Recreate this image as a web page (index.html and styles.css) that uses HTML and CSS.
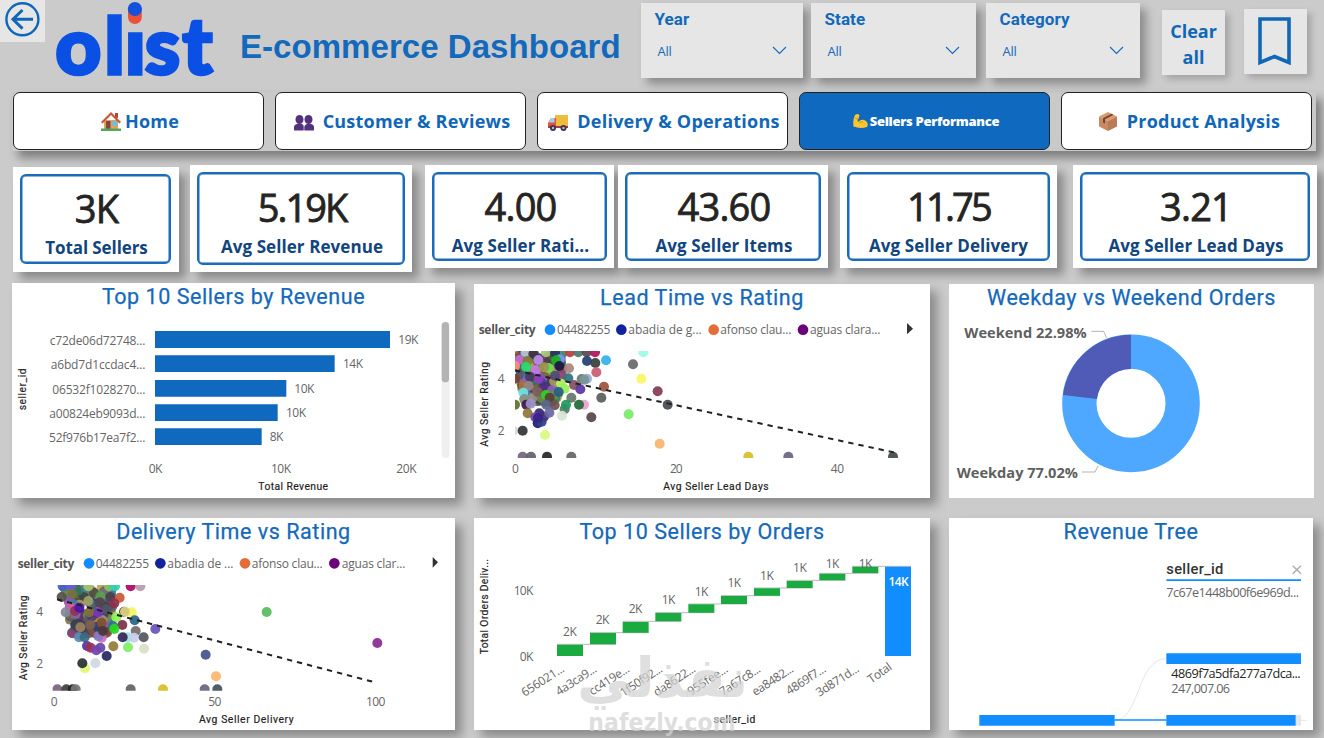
FILE: index.html
```html
<!DOCTYPE html>
<html lang="en">
<head>
<meta charset="utf-8">
<title>E-commerce Dashboard</title>
<link rel="stylesheet" href="styles.css">
</head>
<body>
<header class="header">
  <button class="back" aria-label="Back">
    <svg width="45" height="42" viewBox="0 0 45 42" fill="none" stroke="#1067b8" stroke-width="2.4"><circle cx="22.4" cy="19.3" r="16"/><path d="M33 19.3H13M22.5 10L13 19.3l9.500 9.300" stroke-width="3"/></svg>
  </button>
  <svg class="logo" width="160" height="80" viewBox="55 0 160 80">
    <defs><clipPath id="lg"><path d="M50 0H124V31H145V0H220V80H50z"/></clipPath></defs>
    <text class="logo-text" clip-path="url(#lg)" y="73.500" x="55.500 104.500 125 145 182.500">olist</text>
    <rect x="128" y="6" width="13.800" height="18" rx="6.900" fill="#eb5137"/>
    <circle cx="134.900" cy="9" r="7.100" fill="#1350db"/>
  </svg>
  <h1 class="brand">E-commerce Dashboard</h1>
  <div class="slicers">
    <div class="slicer year"><b>Year</b><span>All</span><svg class="chev" width="15" height="9"><path d="M1 1l6.500 6.500L14 1"/></svg></div>
    <div class="slicer state"><b>State</b><span>All</span><svg class="chev" width="15" height="9"><path d="M1 1l6.500 6.500L14 1"/></svg></div>
    <div class="slicer category"><b>Category</b><span>All</span><svg class="chev" width="15" height="9"><path d="M1 1l6.500 6.500L14 1"/></svg></div>
  </div>
  <button class="tool clear">Clear<br>all</button>
  <button class="tool mark" aria-label="Bookmarks"><svg width="34" height="50" viewBox="0 0 34 50"><path d="M2 2H31V45.500L16.500 39.500L2 45.500z" fill="none" stroke="#1067b8" stroke-width="3.600"/></svg></button>
</header>

<nav class="tabs">
  <a class="tab home"><svg class="ico" width="20" height="20" viewBox="0 0 20 20"><path d="M3 9h14v9H3z" fill="#e6a05e"/><path d="M14 2h3v5h-3z" fill="#b5492f"/><path d="M10 1L0 11l1.500 1.500L10 4l8.500 8.500L20 11z" fill="#c9553a"/><path d="M5 10h4.500v8H5z" fill="#7b4a3f"/><path d="M11.500 10h4.500v5h-4.500z" fill="#62c3e4"/><path d="M0 17.500h20V20H0z" fill="#57a45f"/></svg><span>Home</span></a>
  <a class="tab customer"><svg class="ico" width="20" height="16" viewBox="0 0 20 16" fill="#54317f"><ellipse cx="5.500" cy="4.500" rx="4" ry="4.500"/><ellipse cx="14.500" cy="4.500" rx="4" ry="4.500"/><path d="M0 15.500V12q0-3 5-3.500q4.500 0 4.700 3v4zM10.300 15.500V12q.2-3 4.700-3.500q5 .5 5 3.500v3.500z"/></svg><span>Customer &amp; Reviews</span></a>
  <a class="tab delivery"><svg class="ico" width="20" height="17" viewBox="0 0 20 17"><path d="M7 1h13v12H7z" fill="#efbd3d"/><path d="M3 4h5v10H0V9z" fill="#e8503c"/><path d="M3 4h3.500v4.500H.8z" fill="#9bd3ee"/><path d="M0 12h20v2H0z" fill="#a33b54"/><g fill="#3c3450"><circle cx="5" cy="14" r="3"/><circle cx="15.500" cy="14" r="3"/></g><circle cx="5" cy="14" r="1.200" fill="#bbb"/><circle cx="15.500" cy="14" r="1.200" fill="#bbb"/></svg><span>Delivery &amp; Operations</span></a>
  <a class="tab sellers active"><svg class="ico" width="15" height="14" viewBox="0 0 15 14"><path d="M2 1q3-2 4.500.5L5.500 5l-1 .5L5 8q4-4 8-1q3 3 1 6Q7 15 .5 12.500Q-.5 6 2 1z" fill="#fbc531"/><path d="M2 4l3 1M6 9q2-2 4-1" stroke="#e08f1f" fill="none"/></svg><span>Sellers Performance</span></a>
  <a class="tab product"><svg class="ico" width="18" height="19" viewBox="0 0 18 19"><path d="M9 0l9 4.500L9 9 0 4.500z" fill="#d99a6c"/><path d="M0 4.500L9 9v10l-9-4.500z" fill="#c98a62"/><path d="M18 4.500L9 9v10l9-4.500z" fill="#b87a57"/><path d="M12.500 1.800L4 6.200v4.300l2 1V7.200l8.500-4.400z" fill="#704337"/></svg><span>Product Analysis</span></a>
</nav>

<section class="kpis">
  <div class="kpi k1"><div class="box"><strong>3K</strong><span>Total Sellers</span></div></div>
  <div class="kpi k2"><div class="box"><strong>5.19K</strong><span>Avg Seller Revenue</span></div></div>
  <div class="kpi k3"><div class="box"><strong>4.00</strong><span>Avg Seller Rati...</span></div></div>
  <div class="kpi k4"><div class="box"><strong>43.60</strong><span>Avg Seller Items</span></div></div>
  <div class="kpi k5"><div class="box"><strong>11.75</strong><span>Avg Seller Delivery</span></div></div>
  <div class="kpi k6"><div class="box"><strong>3.21</strong><span>Avg Seller Lead Days</span></div></div>
</section>

<main class="panels">
  <section class="panel p1">
    <h2>Top 10 Sellers by Revenue</h2>
    <svg width="443" height="185" viewBox="36 99 1329 555">
      <text class="din" transform="translate(79 391) rotate(-90)" textLength="126">seller_id</text>
      <g class="lab">
        <text x="149" y="195" textLength="287">c72de06d72748...</text>
        <text x="152" y="268" textLength="284">a6bd7d1ccdac4...</text>
        <text x="157" y="341" textLength="279">06532f1028270...</text>
        <text x="148" y="414" textLength="288">a00824eb9093d...</text>
        <text x="147" y="486" textLength="289">52f976b17ea7f2...</text>
        <text x="1195" y="192" textLength="60">19K</text>
        <text x="1029" y="264" textLength="60">14K</text>
        <text x="883" y="339" textLength="60">10K</text>
        <text x="858" y="411" textLength="60">10K</text>
        <text x="809" y="483" textLength="41">8K</text>
        <text x="446" y="579" textLength="41">0K</text>
        <text x="813" y="579" textLength="60">10K</text>
        <text x="1189" y="579" textLength="61">20K</text>
      </g>
      <g fill="#0f69be"><path d="M465 153h705v51H465zM465 226h539v50H465zM465 300h394v50H465zM465 373h368v50H465zM465 445h320v50H465z"/></g>
      <text class="din" x="775" y="630" textLength="209">Total Revenue</text>
      <rect x="1325" y="126" width="24" height="408" rx="11" fill="#efefef"/>
      <rect x="1325" y="126" width="22" height="181" rx="11" fill="#b3b3b3"/>
    </svg>
  </section>

  <section class="panel p2">
    <h2>Lead Time vs Rating</h2>
    <svg width="456" height="184" viewBox="12 102 1368 552">
      <defs><clipPath id="c1"><path d="M135 213H1330V534H135z"/></clipPath></defs>
      <g class="leg">
        <text class="b" x="26" y="161" textLength="171">seller_city</text>
        <text x="261" y="161" textLength="160">04482255</text>
        <text x="475" y="161" textLength="220">abadia de g...</text>
        <text x="751" y="161" textLength="213">afonso clau...</text>
        <text x="1020" y="161" textLength="211">aguas clara...</text>
      </g>
      <circle cx="240" cy="149" r="16" fill="#118dff"/><circle cx="454" cy="149" r="16" fill="#12239e"/><circle cx="731" cy="149" r="16" fill="#e66c37"/><circle cx="999" cy="149" r="16" fill="#6b007b"/>
      <path d="M1311 129L1329 146L1311 163z" fill="#333"/>
      <g clip-path="url(#c1)" id="lead"></g>
      <path d="M135 271L1280 519" class="trend"/>
      <text class="din" transform="translate(53 500) rotate(-90)" textLength="254">Avg Seller Rating</text>
      <g class="lab">
        <text x="83" y="309">4</text><text x="83" y="465">2</text>
        <text x="126" y="579">0</text><text x="600" y="579" textLength="38">20</text><text x="1082" y="579" textLength="40">40</text>
      </g>
      <text class="din" x="580" y="630" textLength="316">Avg Seller Lead Days</text>
    </svg>
  </section>

  <section class="panel p3">
    <h2>Weekday vs Weekend Orders</h2>
    <svg width="365" height="184" viewBox="27 102 1095 552">
      <circle cx="573" cy="370" r="155" fill="none" stroke="#4fa8ff" stroke-width="103"/>
      <path d="M573 164A206 206 0 0 0 369 345L471 357A103 103 0 0 1 573 267z" fill="#4f5bb6"/>
      <path d="M454 154H491L500 174M426 576H465L474 558" fill="none" stroke="#b3b3b3" stroke-width="3"/>
      <text class="donut" x="73" y="174" textLength="367" lengthAdjust="spacingAndGlyphs">Weekend 22.98%</text>
      <text class="donut" x="50" y="594" textLength="364" lengthAdjust="spacingAndGlyphs">Weekday 77.02%</text>
    </svg>
  </section>

  <section class="panel p4">
    <h2>Delivery Time vs Rating</h2>
    <svg width="443" height="182" viewBox="36 114 1329 546">
      <defs><clipPath id="c2"><path d="M157 225H1330V542H157z"/></clipPath></defs>
      <g class="leg">
        <text class="b" x="53" y="173" textLength="170">seller_city</text>
        <text x="287" y="173" textLength="160">04482255</text>
        <text x="502" y="173" textLength="198">abadia de ...</text>
        <text x="755" y="173" textLength="213">afonso clau...</text>
        <text x="1025" y="173" textLength="191">aguas clar...</text>
      </g>
      <circle cx="267" cy="160" r="16" fill="#118dff"/><circle cx="481" cy="160" r="16" fill="#12239e"/><circle cx="735" cy="160" r="16" fill="#e66c37"/><circle cx="1003" cy="160" r="16" fill="#6b007b"/>
      <path d="M1298 141L1314 157L1298 173z" fill="#333"/>
      <g clip-path="url(#c2)" id="deliv"></g>
      <path d="M171 268L1125 517" class="trend"/>
      <text class="din" transform="translate(80 511) rotate(-90)" textLength="255">Avg Seller Rating</text>
      <g class="lab">
        <text x="109" y="319">4</text><text x="109" y="474">2</text>
        <text x="152" y="588">0</text><text x="625" y="588" textLength="39">50</text><text x="1098" y="588" textLength="58">100</text>
      </g>
      <text class="din" x="597" y="639" textLength="284">Avg Seller Delivery</text>
    </svg>
  </section>

  <section class="panel p5">
    <h2>Top 10 Sellers by Orders</h2>
    <svg width="456" height="182" viewBox="12 114 1368 546">
      <text class="din" transform="translate(53 433) rotate(-90)" textLength="286">Total Orders Deliv...</text>
      <g class="lab"><text x="131" y="255" textLength="59">10K</text><text x="149" y="453" textLength="41">0K</text></g>
      <path d="M261 403H437M360 368H536M458 334H634M556 308H732M655 282H831M753 257H929M852 234H1028M950 211H1127M1048 190H1225M1147 169H1323" stroke="#aaa" stroke-width="2.500"/>
      <g fill="#1aab40"><path d="M261 404h78v34h-78zM360 369h78v34h-78zM458 336h78v32h-78zM556 309h78v25h-78zM655 283h78v25h-78zM753 258h78v24h-78zM852 235h78v22h-78zM950 213h78v21h-78zM1048 191h78v20h-78zM1147 170h78v19h-78z"/></g>
      <path d="M1245 170h78v268h-78z" fill="#118dff"/>
      <g class="lab mid">
        <text x="299" y="379">2K</text><text x="397" y="343">2K</text><text x="496" y="309">2K</text><text x="595" y="282">1K</text><text x="694" y="258">1K</text><text x="792" y="231">1K</text><text x="890" y="210">1K</text><text x="989" y="186">1K</text><text x="1087" y="174">1K</text><text x="1186" y="173">1K</text>
        <text x="1285" y="228" class="tot">14K</text>
      </g>
      <g class="lab">
        <text transform="translate(164 561) rotate(-33)" textLength="145">656021...</text>
        <text transform="translate(267 558) rotate(-33)" textLength="138">4a3ca9...</text>
        <text transform="translate(367 557) rotate(-33)" textLength="136">cc419e...</text>
        <text transform="translate(460 561) rotate(-33)" textLength="143">1f50f92...</text>
        <text transform="translate(560 560) rotate(-33)" textLength="142">da8622...</text>
        <text transform="translate(662 558) rotate(-33)" textLength="137">955fee...</text>
        <text transform="translate(758 559) rotate(-33)" textLength="139">7a67c8...</text>
        <text transform="translate(856 559) rotate(-33)" textLength="140">ea8482...</text>
        <text transform="translate(958 556) rotate(-33)" textLength="134">4869f7...</text>
        <text transform="translate(1048 561) rotate(-33)" textLength="145">3d871d...</text>
        <text transform="translate(1204 521) rotate(-35)" textLength="78">Total</text>
      </g>
      <text class="din" x="731" y="638" textLength="125">seller_id</text>
      <g class="wm">
        <text class="ar" transform="translate(578 562) scale(1.120 1.100)" text-anchor="middle">نفذلي</text>
        <text class="en" x="355" y="664" textLength="442" lengthAdjust="spacingAndGlyphs">nafezly.com</text>
      </g>
    </svg>
  </section>

  <section class="panel p6">
    <h2>Revenue Tree</h2>
    <svg width="364" height="182" viewBox="27 114 1092 546">
      <text class="dinb" x="679" y="192" textLength="171">seller_id</text>
      <path d="M1058 167L1083 191M1083 167L1058 191" stroke="#aaa" stroke-width="4"/>
      <path d="M679 208h404v5H679z" fill="#118dff"/>
      <text class="lab big" x="679" y="261" textLength="398">7c67e1448b00f6e969d...</text>
      <path d="M524 631C600 631 590 446 679 446" stroke="#e6e6e6" stroke-width="3" fill="none"/>
      <path d="M524 630H679" stroke="#118dff" stroke-width="4"/>
      <path d="M1083 631h18" stroke="#e6e6e6" stroke-width="3"/>
      <path d="M1067 615h16v32h-16z" fill="#e6e6e6"/>
      <path d="M679 430h404v32H679zM118 615h406v32H118zM679 615h388v32H679z" fill="#118dff"/>
      <text class="lab big dark" x="694" y="503" textLength="388">4869f7a5dfa277a7dca...</text>
      <text class="lab big" x="694" y="549" textLength="176">247,007.06</text>
    </svg>
  </section>
</main>
<script src="charts.js"></script>
</body>
</html>
```

FILE: styles.css
```css
* { box-sizing: border-box; }
body {
  margin: 0; width: 1324px; height: 738px; overflow: hidden;
  background: #cbcbcb; font-family: "Open Sans", "Noto Sans", sans-serif;
}
button { border: 0; padding: 0; font-family: inherit; }
.header { display: flex; align-items: flex-start; height: 92px; }
.back { width: 45px; height: 42px; background: #e6e6e6; flex: none; }
.back svg, .chev, .ico, .panel svg { display: block; }
.logo { margin-left: 10px; flex: none; overflow: visible; }
.logo-text { font: 900 79px Lato, sans-serif; fill: #0b50e4; stroke: #0b50e4; stroke-width: 3.500px; }
.brand {
  margin: 0 0 0 25px; width: 401px; padding-top: 28px; flex: none;
  font: bold 33px/38px "Liberation Sans", Arial, sans-serif; letter-spacing: .05px; color: #1369bb; white-space: nowrap;
}
.slicers { display: flex; margin-top: 3px; }
.slicer {
  position: relative; height: 75px; padding: 6px 0 0 13.500px; background: #e6e6e6; color: #1369bb;
  box-shadow: 6px 6px 9px rgba(0,0,0,.32); display: flex; flex-direction: column;
}
.year { width: 162px; }
.state { width: 165px; margin-left: 8px; }
.category { width: 154px; margin-left: 10px; }
.slicer b { font: 700 17px/21px Roboto, sans-serif; letter-spacing: .1px; }
.slicer span { font-size: 13px; line-height: 18px; margin: 12px 0 0 3px; letter-spacing: -.2px; }
.chev { position: absolute; right: 16px; top: 43px; fill: none; stroke: #1369bb; stroke-width: 1.100; }
.tool { background: #e6e6e6; box-shadow: 4px 4px 7px rgba(0,0,0,.2); color: #1067b8; height: 65px; flex: none; }
.clear { margin: 10px 0 0 22px; padding-top: 2px; width: 63px; font-size: 18px; font-weight: 700; line-height: 26px; }
.mark { margin: 9px 0 0 19px; width: 63px; }
.mark svg { display: block; margin: 1px 0 0 14px; }

.tabs {
  margin-left: 12px; width: 1304px; height: 59px; display: flex; gap: 11px; padding-left: 1px;
  background: #c9c9c9; box-shadow: 6px 7px 9px rgba(0,0,0,.38);
}
.tab {
  width: 251px; height: 58px; border: 1px solid #222; border-radius: 7px; background: #fff; color: #1067b8; padding-left: 3px;
  font-size: 18px; font-weight: 700; letter-spacing: .22px; display: flex; align-items: center; justify-content: center; white-space: nowrap; flex: none;
}
.home .ico { margin-right: 4px; }
.customer .ico { margin: 3px 9px 0 0; }
.delivery .ico { margin: 2px 9px 0 0; }
.product .ico { margin-right: 10px; }
.tab.product { padding-left: 6px; }
.sellers .ico { margin-right: 2px; }
.tab.active { background: #0f69be; color: #fff; font-size: 13px; font-weight: 800; letter-spacing: -.3px; }

.kpis { display: flex; align-items: flex-start; margin: 14px 0 0 13px; height: 118px; }
.kpi { background: #fff; padding: 7px; flex: none; box-shadow: 7px 7px 9px rgba(0,0,0,.32); }
.box {
  height: 100%; border: 2px solid #1b6bbb; box-shadow: inset 0 0 0 .5px #1b6bbb; border-radius: 6px;
  display: flex; flex-direction: column; align-items: center; white-space: nowrap; padding: 7px 0 0 2px;
}
.box strong {
  font-weight: 400; font-size: 38px; line-height: 50px; color: #252423; letter-spacing: -.8px;
  -webkit-text-stroke: .8px #252423;
}
.box span { font-weight: 700; font-size: 17px; line-height: 24px; color: #11457e; margin-top: 3px; letter-spacing: .08px; }
.k1 { width: 166px; height: 105px; margin-top: 2px; padding-right: 8px; padding-bottom: 8px; }
.k1 .box span { letter-spacing: -.1px; }
.k2 { width: 222px; height: 107px; margin-left: 11px; }
.k2 .box strong { letter-spacing: -2px; }
.k2 .box { padding-top: 8px; }
.k3 { width: 189px; height: 103px; margin-left: 13px; }
.k4 { width: 210px; height: 103px; margin-left: 4px; }
.k5 { width: 217px; height: 103px; margin-left: 12px; }
.k5 .box { padding-left: 0; }
.k5 .box strong { letter-spacing: -2.800px; }
.k6 { width: 244px; height: 103px; margin-left: 16px; }

.panels { display: grid; grid-template-columns: 443px 456px 365px; gap: 20px 19px; margin-left: 12px; grid-template-rows: 215px 212px; }
.panel { background: #fff; box-shadow: 7px 7px 10px rgba(0,0,0,.32); }
.p2, .p3 { margin-top: 1px; }
.p3 { box-shadow: none; }
.p6 { width: 364px; }
.panel svg { overflow: visible; }
.panel h2 {
  margin: 0; height: 30px; text-align: center; font: 400 21.500px/28px Roboto, sans-serif; color: #1369bb;
  letter-spacing: .55px; -webkit-text-stroke: .25px #1369bb;
}
.lab { font-size: 36px; fill: #666; }
.big { font-size: 38px; }
.dark { fill: #252423; }
.mid { text-anchor: middle; letter-spacing: -1.500px; }
.mid .tot { fill: #fff; font-weight: 600; }
.leg { font-size: 36px; fill: #666; }
.leg .b { font-weight: 700; fill: #555; }
.din { font: 400 31px Roboto, sans-serif; fill: #222; stroke: #222; stroke-width: .5px; }
.dinb { font: 500 44px Roboto, sans-serif; fill: #333; }
.donut { font-size: 42px; font-weight: 700; fill: #5f5f5f; }
.trend { stroke: #222; stroke-width: 6; stroke-dasharray: 16 15; fill: none; }
.wm { fill: rgba(210,210,210,.72); }
.ar { font: bold 150px "DejaVu Sans", sans-serif; }
.en { font: bold 76px "DejaVu Sans", sans-serif; }
```

FILE: charts.js
```js
const NS = 'http://www.w3.org/2000/svg';
const palette = ['#59483f', '#4c5b66', '#3f3f46', '#7b6a3d', '#54317f', '#8a5fc0', '#2e7d5b', '#6b8e4e', '#8b4a3a', '#2b3a80', '#716a74', '#b0a04e', '#5aa04d', '#904a6a', '#3f7fa0', '#aa8f86', '#4b3a4e', '#5d5b3a'];

function dot(parent, x, y, color, opacity) {
  const c = document.createElementNS(NS, 'circle');
  c.setAttribute('cx', x);
  c.setAttribute('cy', y);
  c.setAttribute('r', 15);
  c.setAttribute('fill', color);
  c.setAttribute('fill-opacity', opacity);
  parent.appendChild(c);
}

function cloud(parent, count, x0, x1, y0, y1, seed) {
  let s = seed;
  const rnd = () => (s = (s * 16807) % 2147483647) / 2147483647;
  for (let i = 0; i < count; i++) {
    const y = y0 + (y1 - y0) * rnd();
    const k = (y - y0) / (y1 - y0);
    const x = x0 + k * 25 + (x1 - x0 - k * 45) * rnd();
    dot(parent, x, y, palette[Math.floor(rnd() * palette.length)], 0.85);
  }
}

const lead = document.getElementById('lead');
cloud(lead, 210, 138, 285, 218, 365, 77);
[[300,217,'#c23a42'],[325,217,'#4f7771'],[350,217,'#59484b'],[375,217,'#b3125f'],[520,217,'#9dfbe6'],
 [167,217,'#b7c3d0'],[190,222,'#3b3340'],[228,217,'#a6c77a'],[255,220,'#27375f'],[148,240,'#c86bd6'],[135,258,'#ff8c78'],
 [172,243,'#8a7b3c'],[205,240,'#c18bea'],[270,238,'#7e95ff'],[258,241,'#16b41c'],[168,261,'#28dc70'],[198,270,'#c77ae6'],[236,264,'#6ce14e'],[222,262,'#a09350'],
 [268,258,'#1b1744'],[297,265,'#ab857f'],[351,243,'#263f74'],[376,249,'#38413c'],[408,241,'#36b0ee'],[379,277,'#cb5c70'],
 [135,296,'#7c4030'],[180,290,'#463a60'],[206,297,'#8f3dbe'],[295,295,'#2c7680'],[335,297,'#6c7a70'],[351,296,'#99add8'],[343,299,'#7c9494'],[255,287,'#514b79'],
 [489,253,'#68686e'],[514,296,'#f6f765'],[563,334,'#843c55'],[402,320,'#9b543e'],[394,353,'#5a5d5f'],
 [160,318,'#a8722b'],[176,318,'#968487'],[273,311,'#b1fa65'],[284,326,'#9af05c'],[312,315,'#855062'],[331,328,'#5d38a3'],[160,338,'#72dfe7'],[203,336,'#7c6256'],[266,336,'#286080'],[228,345,'#2ed51f'],[239,353,'#5b3e3a'],[304,353,'#65776b'],
 [135,374,'#61702b'],[163,357,'#829385'],[169,374,'#431747'],[182,371,'#9a91d0'],[229,374,'#59678a'],[254,376,'#6c5350'],[284,388,'#567b5d'],[288,374,'#249661'],[342,374,'#efa0cb'],[327,374,'#246b37'],[593,374,'#484b50'],
 [173,400,'#8f7937'],[208,400,'#382478'],[222,410,'#46306c'],[196,412,'#7143ae'],[203,430,'#211f72'],[215,425,'#31418a'],[238,398,'#6868a5'],[276,407,'#d7e4d6'],[204,414,'#38248a'],[364,412,'#594747'],[476,403,'#7aec68'],
 [130,452,'#d3d9df'],[158,452,'#333638'],[225,465,'#dcf982'],[569,491,'#f6b56e'],
 [158,530,'#76647f'],[183,530,'#62626a'],[231,530,'#272729'],[304,530,'#646669'],[835,530,'#d9bd28'],[955,530,'#6a6384'],[1269,530,'#44494b']
].forEach(p => dot(lead, p[0], p[1], p[2], 0.93));

const deliv = document.getElementById('deliv');
cloud(deliv, 200, 192, 345, 230, 375, 991);
[[188,229,'#4562c7'],[213,229,'#665edc'],[265,229,'#aac36f'],[327,229,'#87c567'],[345,229,'#2ed5b1'],[392,229,'#aa0769'],[421,229,'#b79ca9'],
 [185,261,'#55504a'],[216,252,'#77713e'],[265,273,'#a0a269'],[299,277,'#514453'],[331,261,'#473e51'],[359,263,'#c95837'],[343,280,'#922d4c'],
 [211,292,'#d45caf'],[197,307,'#83879f'],[225,303,'#93324b'],[238,293,'#4b12b4'],[268,307,'#827036'],[295,307,'#7835bb'],[395,307,'#f2f55b'],[372,305,'#4d4538'],[375,305,'#ded37d'],
 [349,322,'#8cf757'],[404,331,'#2a6487'],[226,345,'#384450'],[241,352,'#99815e'],[271,344,'#7a604f'],[305,338,'#82502b'],[339,348,'#227b7b'],[367,345,'#7a3149'],[343,357,'#2bd723'],[407,363,'#756b68'],[466,357,'#6b54bb'],
 [237,382,'#568fb5'],[254,382,'#3a6b80'],[305,383,'#ce72bc'],[295,379,'#8978c5'],[309,363,'#4b3838'],[383,382,'#98e6e3'],[368,382,'#34275a'],[402,383,'#c9cdec'],[431,382,'#555760'],
 [261,408,'#5039a3'],[272,413,'#a42d52'],[301,413,'#6548a8'],[289,421,'#7046ae'],[340,409,'#937c3b'],[384,412,'#81ed67'],[432,416,'#d7e1c5'],[320,438,'#282960'],
 [255,475,'#e1f777'],[247,460,'#2c3131'],[286,460,'#d0d8e5'],[617,434,'#46548c'],[648,499,'#fdb66a'],[800,306,'#5aba60'],[1132,399,'#892b91'],
 [172,538,'#76647f'],[199,538,'#3f3f3f'],[218,538,'#252525'],[227,538,'#777'],[392,538,'#606468'],[489,538,'#d9bd28'],[614,538,'#6a6384'],[652,538,'#42525b']
].forEach(p => dot(deliv, p[0], p[1], p[2], 0.93));
```
